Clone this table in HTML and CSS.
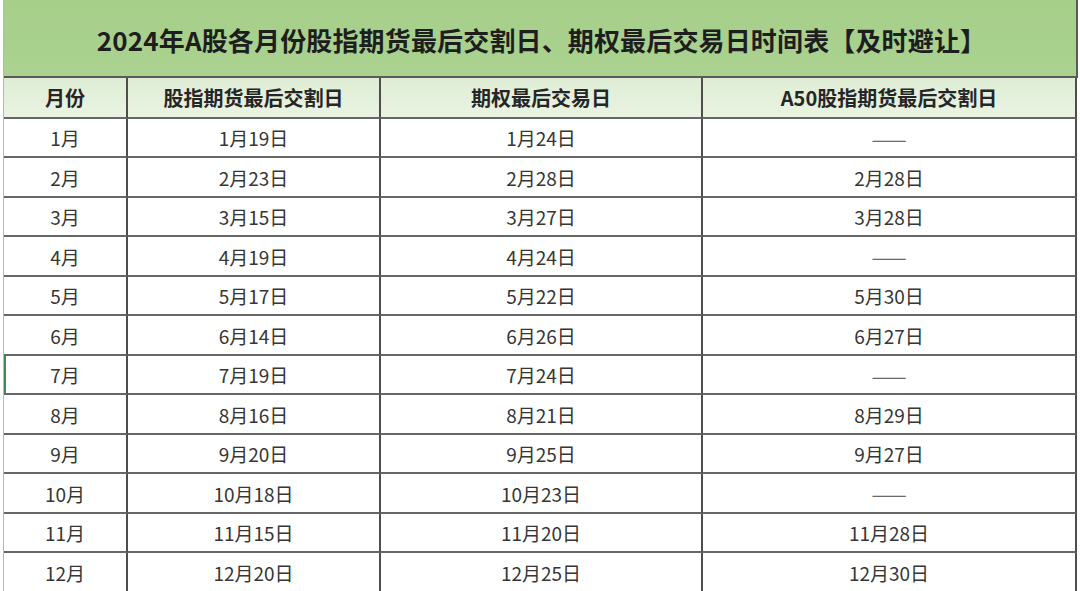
FILE: index.html
```html
<!DOCTYPE html>
<html lang="zh-CN">
<head>
<meta charset="utf-8">
<title>2024年A股各月份股指期货最后交割日、期权最后交易日时间表</title>
<link rel="stylesheet" href="styles.css">
</head>
<body>
<div class="sheet">
  <div class="title">2024年A股各月份股指期货最后交割日、期权最后交易日时间表【及时避让】</div>
  <div class="grid">
    <div class="cell head">月份</div>
    <div class="cell head">股指期货最后交割日</div>
    <div class="cell head">期权最后交易日</div>
    <div class="cell head">A50股指期货最后交割日</div>

    <div class="cell">1月</div><div class="cell">1月19日</div><div class="cell">1月24日</div><div class="cell dash">——</div>
    <div class="cell">2月</div><div class="cell">2月23日</div><div class="cell">2月28日</div><div class="cell">2月28日</div>
    <div class="cell">3月</div><div class="cell">3月15日</div><div class="cell">3月27日</div><div class="cell">3月28日</div>
    <div class="cell">4月</div><div class="cell">4月19日</div><div class="cell">4月24日</div><div class="cell dash">——</div>
    <div class="cell">5月</div><div class="cell">5月17日</div><div class="cell">5月22日</div><div class="cell">5月30日</div>
    <div class="cell">6月</div><div class="cell">6月14日</div><div class="cell">6月26日</div><div class="cell">6月27日</div>
    <div class="cell selected">7月</div><div class="cell">7月19日</div><div class="cell">7月24日</div><div class="cell dash">——</div>
    <div class="cell">8月</div><div class="cell">8月16日</div><div class="cell">8月21日</div><div class="cell">8月29日</div>
    <div class="cell">9月</div><div class="cell">9月20日</div><div class="cell">9月25日</div><div class="cell">9月27日</div>
    <div class="cell">10月</div><div class="cell">10月18日</div><div class="cell">10月23日</div><div class="cell dash">——</div>
    <div class="cell">11月</div><div class="cell">11月15日</div><div class="cell">11月20日</div><div class="cell">11月28日</div>
    <div class="cell">12月</div><div class="cell">12月20日</div><div class="cell">12月25日</div><div class="cell">12月30日</div>
  </div>
</div>
</body>
</html>
```

FILE: styles.css
```css
html, body {
  margin: 0;
  padding: 0;
  background: #ffffff;
  overflow: hidden;
}

body {
  width: 1080px;
  height: 591px;
  font-family: "Noto Sans CJK SC", "Noto Sans", sans-serif;
  color: #333333;
}

.sheet {
  margin-left: 3px;
  width: 1074px;
  border-left: 1px solid #b8b8b8;
}

.title {
  box-sizing: border-box;
  height: 78px;
  background: linear-gradient(#a6cf8a, #abd290);
  border-bottom: 2px solid #5a5a5a;
  border-right: 2px solid #5a5a5a;
  display: flex;
  align-items: center;
  justify-content: center;
  font-size: 26px;
  font-weight: 700;
  color: #1e1e1e;
  letter-spacing: 0.15px;
  padding-top: 2px;
  padding-left: 3px;
}

.grid {
  display: grid;
  grid-template-columns: 124px 253px 322px 374px;
  grid-template-rows: 40.5px repeat(12, 39.5px);
}

.cell {
  box-sizing: border-box;
  border-right: 2px solid #4e4e4e;
  border-bottom: 2px solid #676767;
  display: flex;
  align-items: center;
  justify-content: center;
  font-size: 19px;
  color: #363636;
  padding-top: 1px;
}

.head {
  background: linear-gradient(#dfedd5, #e9f3e2);
  font-size: 20px;
  font-weight: 700;
  color: #262626;
}

.dash {
  color: #6a6a6a;
  font-size: 21px;
}

.selected {
  box-shadow: inset 2px 0 0 #3f8a56;
}
```
